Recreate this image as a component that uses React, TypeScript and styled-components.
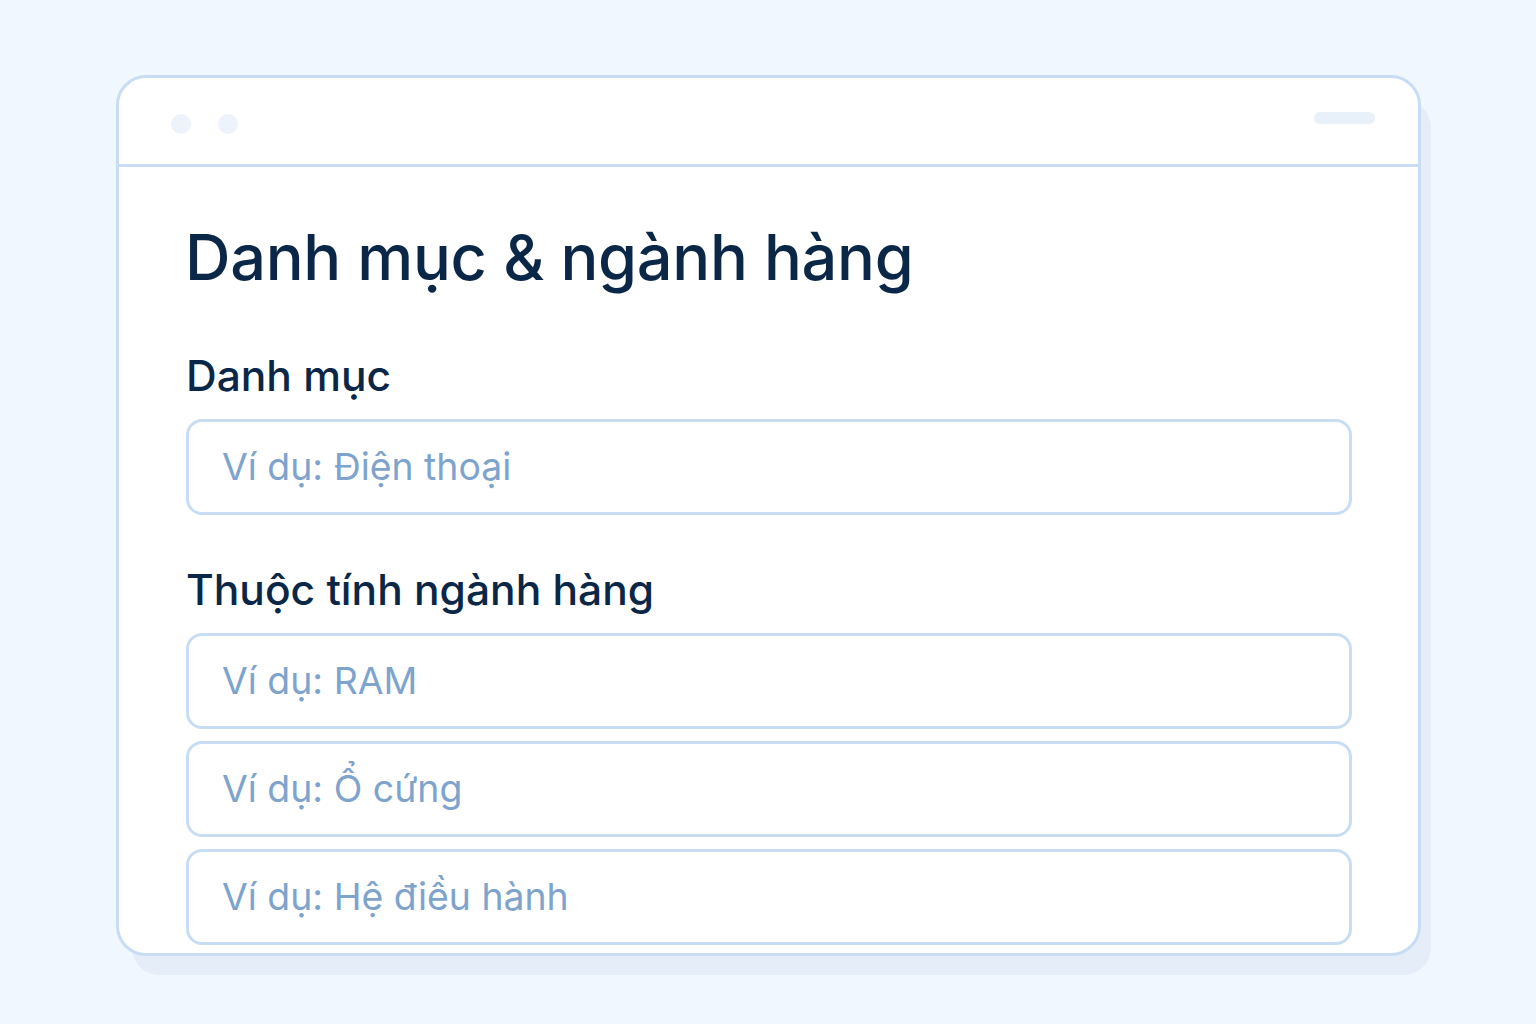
import React from "react";
import styled, { createGlobalStyle } from "styled-components";

const Global = createGlobalStyle`
  html, body {
    margin: 0;
    padding: 0;
    background: #f0f7fe;
  }
  body {
    font-family: Inter, "Noto Sans", sans-serif;
  }
`;

const Page = styled.div`
  width: 1536px;
  height: 1024px;
  padding: 75px 0 0 116px;
  box-sizing: border-box;
`;

const Window = styled.div`
  width: 1305px;
  height: 881px;
  box-sizing: border-box;
  background: #ffffff;
  border: 3px solid #c8ddf4;
  border-radius: 30px;
  box-shadow: 13px 22px 0 -3px #e5edf9;
  overflow: hidden;
  display: flex;
  flex-direction: column;
`;

const TitleBar = styled.div`
  height: 89px;
  flex-shrink: 0;
  border-bottom: 3px solid #c8ddf4;
  display: flex;
  align-items: center;
  padding: 5px 43px 0 52px;
  box-sizing: border-box;
  gap: 27px;
`;

const Dot = styled.span`
  width: 20px;
  height: 20px;
  border-radius: 50%;
  background: #edf3fb;
`;

const Pill = styled.span`
  margin: 0 0 12px auto;
  width: 61px;
  height: 12px;
  border-radius: 6px;
  background: #e8f0fa;
`;

const Body = styled.div`
  padding: 50px 66px 0 67px;
  display: flex;
  flex-direction: column;
`;

const Title = styled.h1`
  margin: 0 0 0 -1px;
  font-size: 63px;
  font-weight: 500;
  line-height: 80px;
  color: #0b2747;
  letter-spacing: -0.3px;
`;

const Label = styled.h2<{ $top: number }>`
  margin: ${(p) => p.$top}px 0 18px;
  font-size: 42.5px;
  font-weight: 500;
  line-height: 50px;
  color: #0b2747;
`;

const Field = styled.div`
  display: flex;
  align-items: center;
  width: 100%;
  height: 96px;
  box-sizing: border-box;
  border: 3px solid #c8ddf4;
  border-radius: 16px;
  padding: 0 0 0 33px;
  margin: 0 0 12px;
  font-size: 37.4px;
  line-height: 1.3;
  color: #7ea3cc;
  background: #ffffff;
`;

export default function App() {
  return (
    <>
      <Global />
      <Page>
        <Window>
          <TitleBar>
            <Dot />
            <Dot />
            <Pill />
          </TitleBar>
          <Body>
            <Title>Danh mục &amp; ngành hàng</Title>
            <Label $top={54}>Danh mục</Label>
            <Field role="textbox">Ví dụ: Điện thoại</Field>
            <Label $top={38}>Thuộc tính ngành hàng</Label>
            <Field role="textbox">Ví dụ: RAM</Field>
            <Field role="textbox">Ví dụ: Ổ cứng</Field>
            <Field role="textbox">Ví dụ: Hệ điều hành</Field>
          </Body>
        </Window>
      </Page>
    </>
  );
}
